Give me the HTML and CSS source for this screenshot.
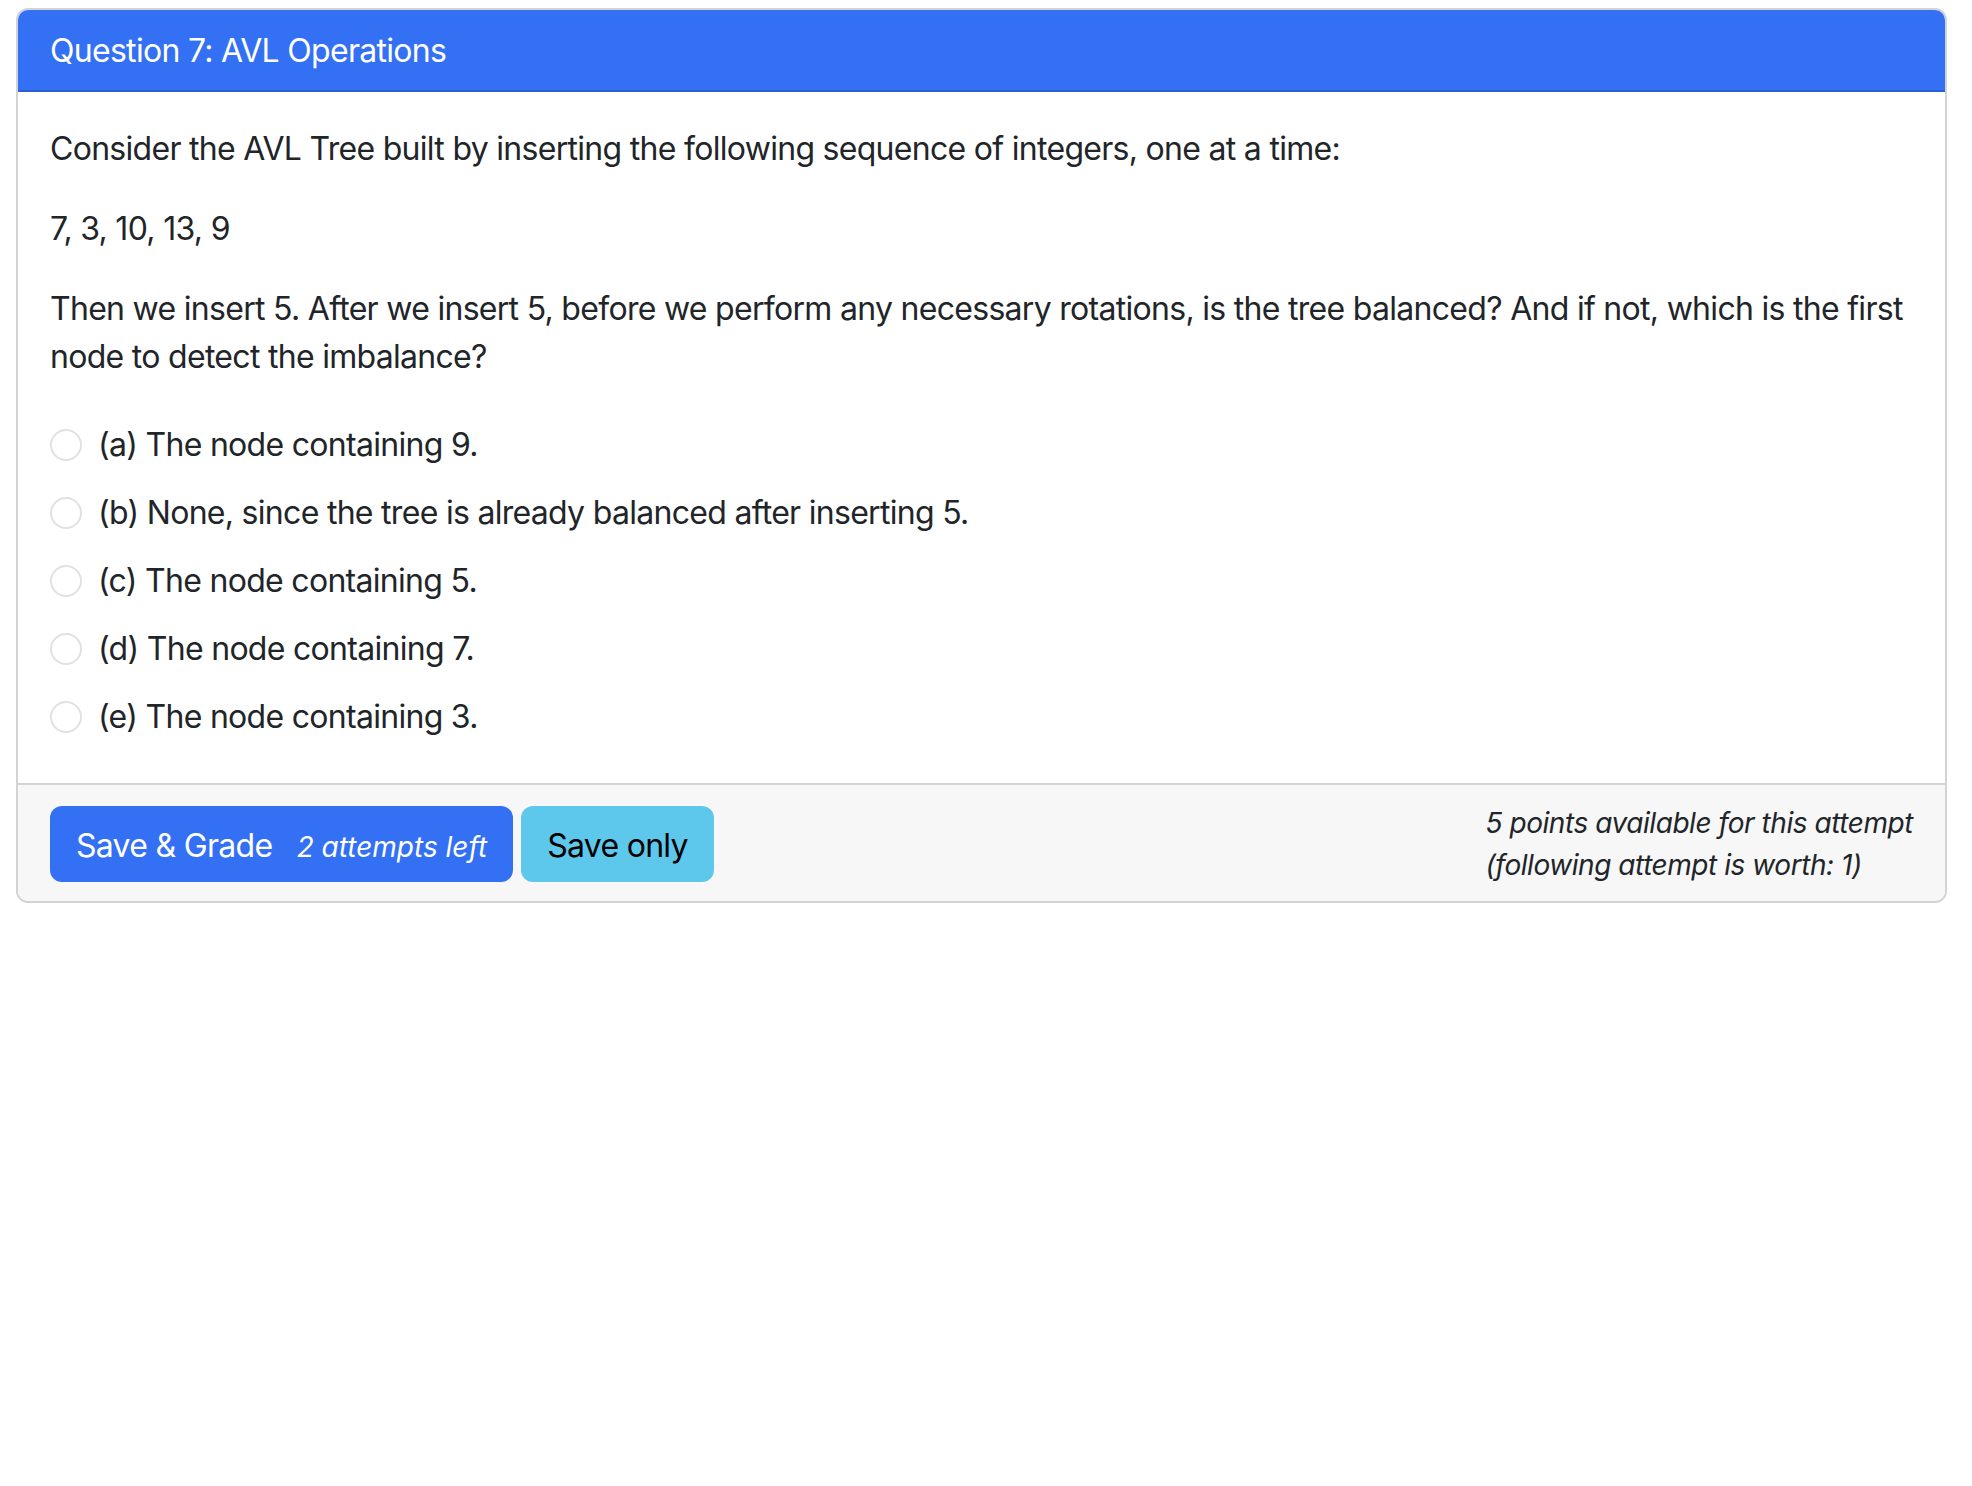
FILE: index.html
```html
<!DOCTYPE html>
<html lang="en">
<head>
<meta charset="utf-8">
<title>Question 7: AVL Operations</title>
<link rel="stylesheet" href="styles.css">
</head>
<body>
<div class="card">
  <div class="card-header">Question 7: AVL Operations</div>
  <div class="card-body">
    <p>Consider the AVL Tree built by inserting the following sequence of integers, one at a time:</p>
    <p>7, 3, 10, 13, 9</p>
    <p>Then we insert 5. After we insert 5, before we perform any necessary rotations, is the tree balanced? And if not, which is the first node to detect the imbalance?</p>
    <div class="options">
      <label class="form-check"><span class="radio"></span><span class="label-text">(a) The node containing 9.</span></label>
      <label class="form-check"><span class="radio"></span><span class="label-text">(b) None, since the tree is already balanced after inserting 5.</span></label>
      <label class="form-check"><span class="radio"></span><span class="label-text">(c) The node containing 5.</span></label>
      <label class="form-check"><span class="radio"></span><span class="label-text">(d) The node containing 7.</span></label>
      <label class="form-check"><span class="radio"></span><span class="label-text">(e) The node containing 3.</span></label>
    </div>
  </div>
  <div class="card-footer">
    <div class="buttons">
      <button class="btn btn-primary">Save &amp; Grade <small class="attempts">2 attempts left</small></button>
      <button class="btn btn-info">Save only</button>
    </div>
    <div class="points">
      <small>5 points available for this attempt<br>(following attempt is worth: 1)</small>
    </div>
  </div>
</div>
</body>
</html>
```

FILE: styles.css
```css
html, body {
  background: #ffffff;
}
body {
  margin: 8px 25px 0 16px;
  font-family: Inter, "Liberation Sans", sans-serif;
  font-size: 32px;
  line-height: 48px;
  letter-spacing: -0.022em;
  color: #212529;
}
.card {
  border: 2px solid #d3d3d3;
  border-radius: 12px;
  overflow: hidden;
  background: #ffffff;
}
.card-header {
  background: #3470f4;
  color: #ffffff;
  padding: 17px 32px 15px;
  border-bottom: 2px solid #2d60d0;
}
.card-body {
  padding: 33px 32px 32px 32px;
}
.card-body p {
  margin: 0 0 32px 0;
}
.options {
  display: flex;
  flex-direction: column;
  gap: 20px;
  margin-top: 40px;
  margin-bottom: 10px;
}
.form-check {
  display: flex;
  align-items: center;
  height: 48px;
}
.radio {
  width: 32px;
  height: 32px;
  box-sizing: border-box;
  border: 2px solid #dee2e6;
  border-radius: 50%;
  margin-right: 16px;
  flex: none;
}
.card-footer {
  background: #f7f7f7;
  border-top: 2px solid #d3d3d3;
  padding: 17px 32px 15px;
  display: flex;
  justify-content: space-between;
  align-items: center;
}
.buttons {
  display: flex;
  gap: 8px;
}
.btn {
  font-family: inherit;
  font-size: 32px;
  line-height: 48px;
  letter-spacing: -0.022em;
  padding: 14px 24px 10px;
  border: 2px solid transparent;
  border-radius: 12px;
  height: 76px;
  box-sizing: border-box;
}
.btn-primary {
  background: #3470f4;
  color: #ffffff;
}
.btn-info {
  background: #5dc8ec;
  color: #000000;
}
.attempts {
  font-size: 28px;
  font-style: italic;
  letter-spacing: 0;
  margin-left: 16px;
}
.points small {
  display: block;
  font-size: 28px;
  line-height: 42px;
  letter-spacing: -0.016em;
  font-style: italic;
}
```
